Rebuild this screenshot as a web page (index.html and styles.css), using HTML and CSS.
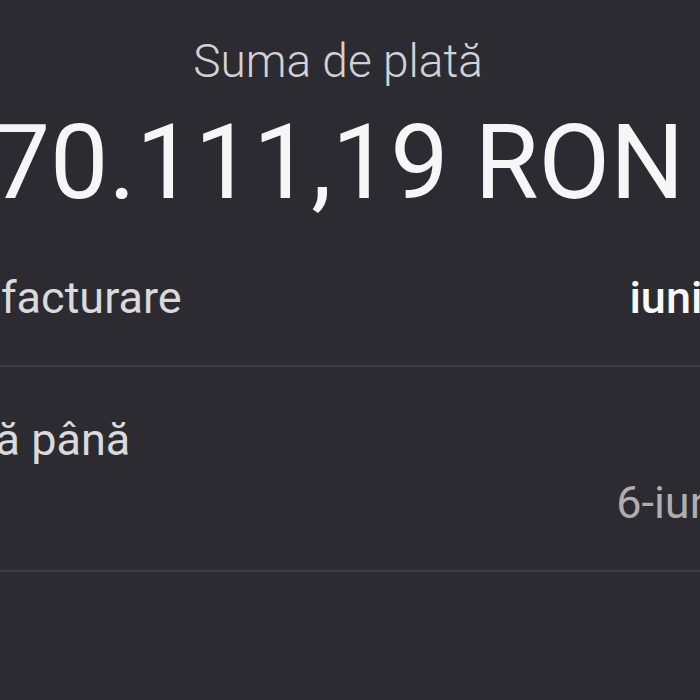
FILE: index.html
```html
<!DOCTYPE html>
<html lang="ro">
<head>
    <meta charset="UTF-8">
    <meta name="viewport" content="width=device-width, initial-scale=1.0">
    <title>Factura</title>
    <link rel="stylesheet" href="styles.css">
</head>
<body>
    <div class="summary">
        <div class="summary-title">Suma de plată</div>
        <div class="summary-amount">70.111,19 RON</div>
    </div>

    <div class="details">
        <div class="detail-row">
            <span class="detail-label">Luna de facturare</span>
            <span class="detail-value">iunie 2023</span>
        </div>
        <div class="detail-row detail-row-stacked">
            <span class="detail-label">Scadentă până</span>
            <span class="detail-value detail-value-muted">6-iun.-2023</span>
        </div>
    </div>
</body>
</html>
```

FILE: styles.css
```css
html, body {
    height: 100%;
}
body {
    margin: 0;
    overflow: hidden;
    background-color: #2c2b31;
    font-family: Roboto, "Noto Sans", sans-serif;
    color: #f2f2f2;
}
.summary {
    width: 1000px;
    margin-left: -162px;
    padding-top: 34px;
    text-align: center;
    white-space: nowrap;
}
.summary-title {
    font-size: 46px;
    font-weight: 300;
    line-height: 55px;
    color: #d2d2d4;
}
.summary-amount {
    margin-top: 22px;
    font-size: 104px;
    line-height: 104px;
    font-weight: 400;
    color: #f6f6f6;
}
.details {
    width: 1008px;
    margin-left: -168px;
    margin-top: 10px;
}
.detail-row {
    display: flex;
    justify-content: space-between;
    align-items: baseline;
    padding: 46px 0 40px;
    border-bottom: 2px solid #3d3c42;
    font-size: 45px;
    line-height: 54px;
    white-space: nowrap;
}
.detail-row-stacked {
    align-items: flex-start;
}
.detail-row-stacked .detail-value {
    margin-top: 63px;
}
.detail-label {
    color: #dadadc;
    font-weight: 400;
}
.detail-value {
    color: #f8f8f8;
    font-weight: 500;
}
.detail-value-muted {
    color: #aeaeb2;
    font-weight: 400;
}
```
